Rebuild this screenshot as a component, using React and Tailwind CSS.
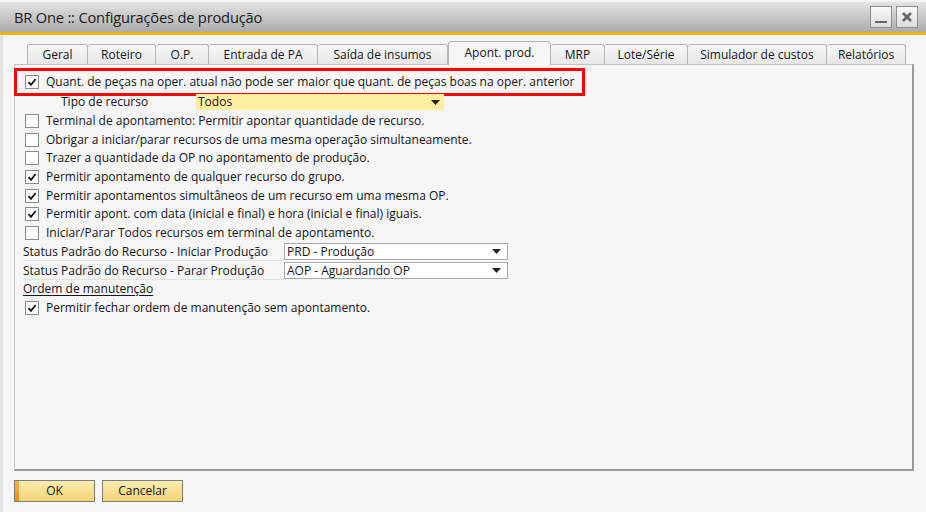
import React from "react";

const tabs = [
  { label: "Geral", w: 61 },
  { label: "Roteiro", w: 68 },
  { label: "O.P.", w: 53 },
  { label: "Entrada de PA", w: 109 },
  { label: "Saída de insumos", w: 130 },
  { label: "Apont. prod.", w: 103, active: true },
  { label: "MRP", w: 54 },
  { label: "Lote/Série", w: 83 },
  { label: "Simulador de custos", w: 139 },
  { label: "Relatórios", w: 79 },
];

function Check({ checked }) {
  return (
    <span className="w-[14px] h-[14px] border border-[#8c8c8c] bg-white flex items-center justify-center shrink-0">
      {checked && (
        <svg width="10" height="10" viewBox="0 0 10 10">
          <path d="M1.5 5.2 L4 7.8 L8.6 2" fill="none" stroke="#111" strokeWidth="1.8" />
        </svg>
      )}
    </span>
  );
}

function CheckRow({ checked, children }) {
  return (
    <div className="h-[18.7px] flex items-center pl-[10px] gap-[7px]">
      <Check checked={checked} />
      <span>{children}</span>
    </div>
  );
}

function Arrow() {
  return (
    <svg width="9" height="5" viewBox="0 0 9 5" className="shrink-0">
      <path d="M0 0 H9 L4.5 5 Z" fill="#222" />
    </svg>
  );
}

function StatusRow({ label, value }) {
  return (
    <div className="h-[18.7px] flex items-center pl-[8px]">
      <span className="w-[261px] border-b border-[#e2e2e2] leading-[17px]">{label}</span>
      <div className="w-[224px] h-[17px] bg-white border border-[#a8a8a8] flex items-center justify-between pl-[2px] pr-[6px]">
        <span>{value}</span>
        <Arrow />
      </div>
    </div>
  );
}

export default function App() {
  return (
    <div
      className="w-[926px] h-[512px] bg-[#f6f6f6] text-[#141420] text-[12px] overflow-hidden flex flex-col"
      style={{ fontFamily: '"Open Sans", "Noto Sans", sans-serif' }}
    >
      {/* barra de título */}
      <div className="h-[32px] shrink-0 bg-gradient-to-b from-[#e4e4e4] to-[#acacac] border-t-2 border-[#f4f4f4] flex items-center justify-between pl-[14px] pr-[8px]">
        <span className="text-[14.7px] text-[#1a1a1a] tracking-[-0.2px]">BR One :: Configurações de produção</span>
        <div className="flex gap-[4px]">
          <div className="w-[22px] h-[22px] bg-gradient-to-b from-[#fafafa] to-[#dcdcdc] border border-[#8e8e8e] flex items-end justify-center pb-[4px]">
            <span className="w-[12px] h-[2px] bg-[#666]" />
          </div>
          <div className="w-[22px] h-[22px] bg-gradient-to-b from-[#fafafa] to-[#dcdcdc] border border-[#8e8e8e] flex items-center justify-center">
            <svg width="12" height="12" viewBox="0 0 12 12">
              <path d="M2 2 L10 10 M10 2 L2 10" stroke="#666" strokeWidth="2.6" />
            </svg>
          </div>
        </div>
      </div>
      <div className="h-[3px] shrink-0 bg-[#f4b400]" />

      <div className="flex-1 flex border-l-[3px] border-[#e3e3e3]">
        <div className="flex-1 flex flex-col pl-[11px] pr-[7px]">
          {/* abas */}
          <div className="flex items-end pl-[13px] mt-[6px] h-[23px]">
            {tabs.map((t) =>
              t.active ? (
                <div
                  key={t.label}
                  style={{ width: t.w }}
                  className="h-[24px] -mb-px relative z-10 bg-[#f6f6f6] border border-b-0 border-[#b4b4b4] rounded-t-[4px] flex items-center justify-center pb-[2px]"
                >
                  {t.label}
                </div>
              ) : (
                <div
                  key={t.label}
                  style={{ width: t.w }}
                  className="h-[20px] bg-gradient-to-b from-[#f8f8f8] to-[#e6e6e6] border border-b-0 border-l-0 first:border-l border-[#b4b4b4] rounded-t-[3px] flex items-center justify-center"
                >
                  {t.label}
                </div>
              )
            )}
          </div>

          {/* painel */}
          <div className="h-[407px] w-[900px] border border-[#c4c4c4] border-r-[2px] border-b-[2px] border-r-[#9a9a9a] border-b-[#9a9a9a] pt-[3px] relative">
            <div className="-ml-px w-[571px] h-[28px] border-[3px] border-[#ff0000] flex items-center pl-[8px] gap-[7px]">
              <Check checked />
              <span>Quant. de peças na oper. atual não pode ser maior que quant. de peças boas na oper. anterior</span>
            </div>
            <div className="-mt-[3px]">
              <div className="h-[18.7px] flex items-center pl-[46px]">
                <span className="w-[135px]">Tipo de recurso</span>
                <div className="w-[248px] h-[16px] bg-[#fdef9f] flex items-center justify-between pl-[2px] pr-[4px]">
                  <span>Todos</span>
                  <Arrow />
                </div>
              </div>
              <CheckRow>Terminal de apontamento: Permitir apontar quantidade de recurso.</CheckRow>
              <CheckRow>Obrigar a iniciar/parar recursos de uma mesma operação simultaneamente.</CheckRow>
              <CheckRow>Trazer a quantidade da OP no apontamento de produção.</CheckRow>
              <CheckRow checked>Permitir apontamento de qualquer recurso do grupo.</CheckRow>
              <CheckRow checked>Permitir apontamentos simultâneos de um recurso em uma mesma OP.</CheckRow>
              <CheckRow checked>Permitir apont. com data (inicial e final) e hora (inicial e final) iguais.</CheckRow>
              <CheckRow>Iniciar/Parar Todos recursos em terminal de apontamento.</CheckRow>
              <StatusRow label="Status Padrão do Recurso - Iniciar Produção" value="PRD - Produção" />
              <StatusRow label="Status Padrão do Recurso - Parar Produção" value="AOP - Aguardando OP" />
              <div className="h-[18.7px] flex items-center pl-[8px]">
                <span className="underline underline-offset-2">Ordem de manutenção</span>
              </div>
              <CheckRow checked>Permitir fechar ordem de manutenção sem apontamento.</CheckRow>
            </div>
          </div>

          {/* botões */}
          <div className="flex gap-[7px] mt-[9px]">
            <div className="w-[81px] h-[22px] border border-[#7c7c7c] bg-gradient-to-b from-[#fcecb0] to-[#f3d472] flex items-center relative">
              <span className="absolute left-0 top-0 bottom-0 w-[4px] bg-gradient-to-b from-[#f8b640] to-[#ef8a08]" />
              <span className="flex-1 text-center">OK</span>
            </div>
            <div className="w-[81px] h-[22px] border border-[#7c7c7c] bg-gradient-to-b from-[#fcecb0] to-[#f3d472] flex items-center justify-center">
              Cancelar
            </div>
          </div>
        </div>
      </div>
    </div>
  );
}
